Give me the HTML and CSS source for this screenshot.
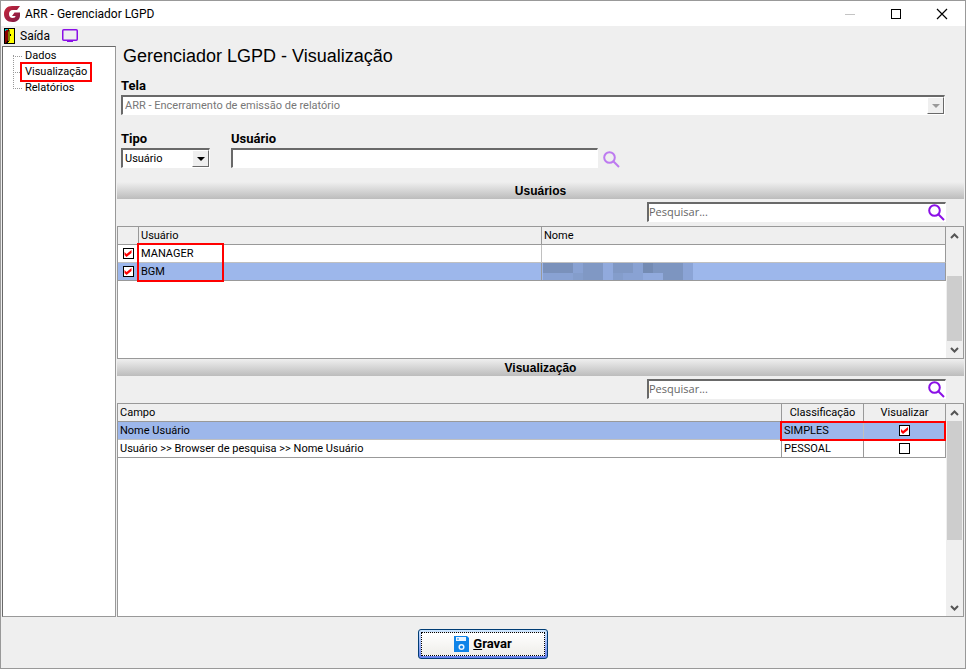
FILE: index.html
```html
<!DOCTYPE html>
<html lang="pt-BR">
<head>
    <meta charset="UTF-8">
    <meta name="viewport" content="width=device-width, initial-scale=1.0">
    <title>ARR - Gerenciador LGPD</title>
    <link rel="stylesheet" href="styles.css">
</head>
<body>
    <div class="window">
        <header class="titlebar">
            <svg class="logo" width="17" height="16" viewBox="0 0 17 16">
                <defs>
                    <linearGradient id="logo-fill" x1="0" y1="0" x2="1" y2="1">
                        <stop offset="0" stop-color="#c9273c"/>
                        <stop offset="1" stop-color="#7f1a45"/>
                    </linearGradient>
                </defs>
                <path d="M16 0L13 4H9C6 4 5 6 5 8C5 10.500 6.500 12 8.500 12C10.500 12 11.500 11 11.500 10H8L10.500 6.500H16V10C15.500 14 12.500 16 8.500 16C3 16 0 12.500 0 8C0 3.500 3 0 8 0Z" fill="url(#logo-fill)"/>
            </svg>
            <span class="titlebar-text">ARR - Gerenciador LGPD</span>
            <div class="window-buttons">
                <button class="win-btn" aria-label="Minimizar" disabled>
                    <svg width="12" height="12"><path d="M1 6.500H11" stroke="#c4c4c4"/></svg>
                </button>
                <button class="win-btn" aria-label="Maximizar">
                    <svg width="12" height="12"><rect x="1.500" y="1.500" width="9" height="9" fill="none" stroke="#000"/></svg>
                </button>
                <button class="win-btn" aria-label="Fechar">
                    <svg width="12" height="12"><path d="M1 1L11 11M11 1L1 11" stroke="#000" stroke-width="1.200"/></svg>
                </button>
            </div>
        </header>

        <nav class="toolbar">
            <button class="tool-btn">
                <svg width="11" height="16" viewBox="0 0 11 16">
                    <rect width="11" height="16" fill="#000"/>
                    <rect x="4" y="1" width="6" height="14" fill="#ffff00"/>
                    <path d="M1 1H5V3L4 4V12L2 15H1Z" fill="#8b0000"/>
                    <path d="M1 1H4V2H2V3H1Z" fill="#00c8c8"/>
                    <path d="M5 2V13L3 15" fill="none" stroke="#000"/>
                    <rect x="6" y="6" width="1" height="2" fill="#000"/>
                </svg>
                Saída
            </button>
            <button class="tool-btn" aria-label="Tela">
                <svg width="16" height="14" viewBox="0 0 16 14">
                    <rect x="0.750" y="0.750" width="14.500" height="10.500" rx="1" fill="none" stroke="#8a0fe6" stroke-width="1.500"/>
                    <rect x="5" y="11" width="6" height="2" fill="#8a0fe6"/>
                </svg>
            </button>
        </nav>

        <main class="workspace">
            <aside class="sidebar">
                <ul class="tree">
                    <li><a href="#">Dados</a></li>
                    <li><a href="#" class="marked">Visualização</a></li>
                    <li><a href="#">Relatórios</a></li>
                </ul>
            </aside>

            <section class="content">
                <form class="filters">
                    <h1>Gerenciador LGPD - Visualização</h1>
                    <div class="field">
                        <label for="tela">Tela</label>
                        <div class="combo disabled">
                            <select id="tela" disabled>
                                <option>ARR - Encerramento de emissão de relatório</option>
                            </select>
                            <span class="combo-arrow"></span>
                        </div>
                    </div>
                    <div class="filter-row">
                        <div class="field field-tipo">
                            <label for="tipo">Tipo</label>
                            <div class="combo">
                                <select id="tipo">
                                    <option>Usuário</option>
                                </select>
                                <span class="combo-arrow"></span>
                            </div>
                        </div>
                        <div class="field field-usuario">
                            <label for="usuario">Usuário</label>
                            <input class="text-input" id="usuario" type="text">
                        </div>
                        <button type="button" class="lookup" aria-label="Buscar usuário">
                            <svg width="17" height="17" viewBox="0 0 17 17" fill="none" stroke="#bd7af0" stroke-width="2">
                                <circle cx="6.500" cy="6.500" r="5.300"/>
                                <path d="M10.300 10.300L16 16"/>
                            </svg>
                        </button>
                    </div>
                </form>

                <h2 class="section-title">Usuários</h2>
                <div class="search-row">
                    <div class="search">
                        <input type="text" placeholder="Pesquisar..." aria-label="Pesquisar usuários">
                        <svg width="17" height="17" viewBox="0 0 17 17" fill="none" stroke="#8a0fe6" stroke-width="2">
                            <circle cx="6.500" cy="6.500" r="5.300"/>
                            <path d="M10.300 10.300L16 16"/>
                        </svg>
                    </div>
                </div>
                <div class="panel panel-users">
                    <div class="grid-area">
                        <table class="grid">
                            <colgroup>
                                <col class="col-check">
                                <col>
                                <col>
                            </colgroup>
                            <thead>
                                <tr><th></th><th>Usuário</th><th>Nome</th></tr>
                            </thead>
                            <tbody>
                                <tr>
                                    <td class="center"><input type="checkbox" aria-label="MANAGER" checked></td>
                                    <td class="user-cell">MANAGER<span class="mark mark-users"></span></td>
                                    <td></td>
                                </tr>
                                <tr class="selected">
                                    <td class="center"><input type="checkbox" aria-label="BGM" checked></td>
                                    <td>BGM</td>
                                    <td class="masked">
                                        <svg width="150" height="17" viewBox="0 0 150 17" shape-rendering="crispEdges">
                                            <rect width="150" height="17" fill="#849dcb"/>
                                            <path d="M0 0h30v10h-30z" fill="#7a91bb"/>
                                            <path d="M40 0h20v17h-20zM70 0h20v10h-20z" fill="#8098c4"/>
                                            <path d="M30 0h10v10h-10zM90 0h10v10h-10zM0 10h30v7h-30zM80 10h20v7h-20z" fill="#89a2d3"/>
                                            <path d="M60 0h10v17h-10zM100 10h20v7h-20z" fill="#91aadd"/>
                                            <path d="M100 0h10v10h-10z" fill="#748bb3"/>
                                            <path d="M110 0h30v10h-30zM120 10h20v7h-20z" fill="#7d95c0"/>
                                            <path d="M140 0h10v17h-10z" fill="#8ba4d6"/>
                                        </svg>
                                    </td>
                                </tr>
                            </tbody>
                        </table>
                    </div>
                    <div class="scrollbar">
                        <svg class="arrow" width="9" height="6"><path d="M1 5L4.500 1.500L8 5" /></svg>
                        <div class="track at-end"><div class="thumb thumb-users"></div></div>
                        <svg class="arrow" width="9" height="6"><path d="M1 1L4.500 4.500L8 1" /></svg>
                    </div>
                </div>

                <h2 class="section-title">Visualização</h2>
                <div class="search-row">
                    <div class="search">
                        <input type="text" placeholder="Pesquisar..." aria-label="Pesquisar campos">
                        <svg width="17" height="17" viewBox="0 0 17 17" fill="none" stroke="#8a0fe6" stroke-width="2">
                            <circle cx="6.500" cy="6.500" r="5.300"/>
                            <path d="M10.300 10.300L16 16"/>
                        </svg>
                    </div>
                </div>
                <div class="panel panel-fields">
                    <div class="grid-area">
                        <table class="grid">
                            <colgroup>
                                <col>
                                <col class="col-class">
                                <col class="col-view">
                            </colgroup>
                            <thead>
                                <tr><th>Campo</th><th class="center">Classificação</th><th class="center">Visualizar</th></tr>
                            </thead>
                            <tbody>
                                <tr class="selected">
                                    <td>Nome Usuário</td>
                                    <td class="class-cell">SIMPLES<span class="mark mark-class"></span></td>
                                    <td class="center"><input type="checkbox" aria-label="Visualizar Nome Usuário" checked></td>
                                </tr>
                                <tr>
                                    <td>Usuário &gt;&gt; Browser de pesquisa &gt;&gt; Nome Usuário</td>
                                    <td>PESSOAL</td>
                                    <td class="center"><input type="checkbox" aria-label="Visualizar Browser de pesquisa"></td>
                                </tr>
                            </tbody>
                        </table>
                    </div>
                    <div class="scrollbar">
                        <svg class="arrow" width="9" height="6"><path d="M1 5L4.500 1.500L8 5" /></svg>
                        <div class="track"><div class="thumb thumb-fields"></div></div>
                        <svg class="arrow" width="9" height="6"><path d="M1 1L4.500 4.500L8 1" /></svg>
                    </div>
                </div>
            </section>
        </main>

        <footer class="footer">
            <button class="save-btn">
                <span class="save-focus">
                    <svg width="15" height="16" viewBox="0 0 15 16">
                        <path d="M0 0H13L15 2V16H0Z" fill="#0f84e8"/>
                        <path d="M2 1H12V5H2Z" fill="#e8f4ff"/>
                        <rect x="3" y="2" width="2" height="2" fill="#7fbff5"/>
                        <circle cx="7.500" cy="11" r="2.300" fill="none" stroke="#e8f4ff" stroke-width="1.500"/>
                    </svg>
                    <span><u>G</u>ravar</span>
                </span>
            </button>
        </footer>
    </div>
</body>
</html>
```

FILE: styles.css
```css
* {
    box-sizing: border-box;
}
body {
    margin: 0;
    font-family: Roboto, "Liberation Sans", Arial, sans-serif;
    font-size: 11px;
    line-height: 16px;
    color: #000;
}
button, input, select {
    font: inherit;
    color: inherit;
}
button {
    padding: 0;
    border: none;
    background: none;
}
svg {
    display: block;
}
.window {
    display: flex;
    flex-direction: column;
    min-height: 100vh;
    border: 1px solid #999;
    background: #efefef;
}

/* title bar */
.titlebar {
    display: flex;
    align-items: center;
    height: 25px;
    padding-left: 3px;
    background: #fff;
}
.titlebar-text {
    flex: 1;
    margin-left: 4px;
    font-size: 12px;
}
.window-buttons {
    display: flex;
}
.win-btn {
    display: flex;
    align-items: center;
    justify-content: center;
    width: 46px;
    height: 25px;
}

/* toolbar */
.toolbar {
    display: flex;
    align-items: center;
    gap: 12px;
    height: 20px;
    padding: 0 3px;
}
.tool-btn {
    display: flex;
    align-items: center;
    gap: 5px;
    font-size: 12px;
}

.workspace {
    flex: 1;
    display: flex;
    padding: 0 1px;
}

/* tree */
.sidebar {
    width: 114px;
    margin-right: 1px;
    border: 1px solid #999;
    border-color: #696969 #999 #999 #696969;
    background: #fff;
}
.tree {
    position: relative;
    margin: 1px 0 0 10px;
    padding: 0;
    list-style: none;
}
.tree::before {
    content: "";
    position: absolute;
    top: 7px;
    bottom: 7px;
    left: 0;
    border-left: 1px dotted #999;
}
.tree li {
    display: flex;
    align-items: center;
    height: 16px;
}
.tree li::before {
    content: "";
    width: 9px;
    border-top: 1px dotted #999;
}
.tree a {
    padding: 0 3px;
    color: #000;
    text-decoration: none;
    white-space: nowrap;
}
.tree a.marked {
    outline: 2px solid #f00;
}

/* filters */
.content {
    flex: 1;
    display: flex;
    flex-direction: column;
    min-width: 0;
}
.filters {
    display: flex;
    flex-direction: column;
    gap: 16px;
    padding: 0 19px 14px 4px;
}
h1 {
    margin: 0 0 0 2px;
    font-family: "Liberation Sans", Arial, sans-serif;
    font-size: 18px;
    font-weight: normal;
    line-height: 20px;
}
h1 + .field {
    margin-top: -4px;
}
.field label {
    display: block;
    height: 17px;
    font-weight: bold;
    font-size: 13px;
}
.filter-row {
    display: flex;
    align-items: flex-end;
}
.field-tipo {
    width: 89px;
    margin-right: 21px;
}
.field-usuario {
    width: 367px;
}
.combo,
.text-input,
.search {
    height: 20px;
    border: 1px solid #fff;
    border-top: 2px solid #696969;
    border-left: 2px solid #696969;
    background: #fff;
}
.text-input {
    display: block;
    width: 100%;
    padding: 0 2px;
    outline: none;
}
.combo {
    position: relative;
}
.combo select {
    appearance: none;
    display: block;
    width: 100%;
    height: 17px;
    padding: 0 18px 0 2px;
    border: none;
    background: #fff;
    outline: none;
}
.combo-arrow {
    position: absolute;
    top: 0;
    right: 0;
    display: flex;
    align-items: center;
    justify-content: center;
    width: 17px;
    height: 17px;
    border: 1px solid #fff;
    border-right-color: #696969;
    border-bottom-color: #696969;
    background: #efefef;
    pointer-events: none;
}
.combo-arrow::before {
    content: "";
    border: 4px solid transparent;
    border-top-color: #000;
    border-bottom: none;
}
.combo.disabled select {
    color: #777;
    opacity: 1;
}
.combo.disabled .combo-arrow::before {
    border-top-color: #999;
}
.lookup {
    margin-left: 5px;
}

/* section headings and search */
.section-title {
    height: 17px;
    margin: 0;
    background: linear-gradient(#efefef, #bcbcbc);
    font-family: "Liberation Sans", Arial, sans-serif;
    font-size: 12px;
    line-height: 18px;
    text-align: center;
}
.search-row {
    display: flex;
    justify-content: flex-end;
    padding: 3px 18px 4px 0;
}
.search {
    display: flex;
    width: 299px;
}
.search input {
    flex: 1;
    min-width: 0;
    height: 16px;
    padding: 0;
    border: none;
    outline: none;
    background: none;
    font-family: "Open Sans", "Noto Sans", sans-serif;
}
.search input::placeholder {
    color: #666;
}

/* grids */
.panel {
    display: flex;
    border: 1px solid #999;
    background: #fff;
}
.panel-users {
    min-height: 133px;
}
.panel-fields {
    flex: 1;
}
.grid-area {
    flex: 1;
}
.grid {
    width: 100%;
    border-collapse: separate;
    border-spacing: 0;
    table-layout: fixed;
}
.grid th,
.grid td {
    height: 18px;
    padding: 0 2px;
    border-right: 1px solid #c0c0c0;
    border-bottom: 1px solid #c0c0c0;
    font-weight: normal;
    line-height: 16px;
    text-align: left;
    white-space: nowrap;
}
.grid th {
    border-color: #999;
    background: #efefef;
}
.grid tr > :last-child,
.grid tbody tr:last-child td {
    border-right-color: #999;
}
.grid tbody tr:last-child td {
    border-bottom-color: #999;
}
.grid .center {
    text-align: center;
}
.grid .selected td {
    background: #9db7eb;
}
.grid .masked {
    padding: 0 1px;
}
.col-check {
    width: 21px;
}
.col-class {
    width: 82px;
}
.col-view {
    width: 82px;
}
.grid .col-check + col {
    width: 403px;
}
.grid input {
    appearance: none;
    display: block;
    width: 11px;
    height: 11px;
    margin: 0 auto;
    border: 1px solid #000;
    background: #fff;
}
.grid input:checked::before {
    content: "";
    display: block;
    width: 9px;
    height: 9px;
    background: #f00;
    clip-path: polygon(1px 3px, 3px 5px, 8px 1px, 8px 4px, 3px 8px, 1px 6px);
}

/* red callouts over the cells */
.user-cell,
.class-cell {
    position: relative;
}
.mark {
    position: absolute;
    border: 2px solid #f00;
    pointer-events: none;
}
.mark-users {
    top: -2px;
    left: -2px;
    width: 87px;
    height: 39px;
}
.mark-class {
    top: -1px;
    left: -2px;
    width: 166px;
    height: 20px;
    z-index: 1;
}

/* scrollbars */
.scrollbar {
    display: flex;
    flex-direction: column;
    align-items: center;
    width: 17px;
    padding: 6px 1px 5px;
    background: #efefef;
}
.scrollbar .arrow {
    fill: none;
    stroke: #555;
    stroke-width: 2;
}
.track {
    flex: 1;
    display: flex;
    flex-direction: column;
    align-self: stretch;
    margin: 5px 0 6px;
}
.track.at-end {
    justify-content: flex-end;
}
.thumb {
    background: #cdcdcd;
}
.thumb-users {
    height: 67%;
}
.thumb-fields {
    height: 67%;
}

/* footer */
.footer {
    display: flex;
    justify-content: center;
    padding: 12px 0 9px;
}
.save-btn {
    width: 130px;
    height: 30px;
    padding: 2px;
    border: 1px solid #003c74;
    border-radius: 3px;
    background: linear-gradient(#cee7ff, #6982ee);
}
.save-focus {
    display: flex;
    align-items: center;
    justify-content: center;
    gap: 4px;
    height: 24px;
    border: 1px dotted #000;
    background: linear-gradient(#fff, #efeeea);
    font-size: 13px;
    font-weight: bold;
}
```
